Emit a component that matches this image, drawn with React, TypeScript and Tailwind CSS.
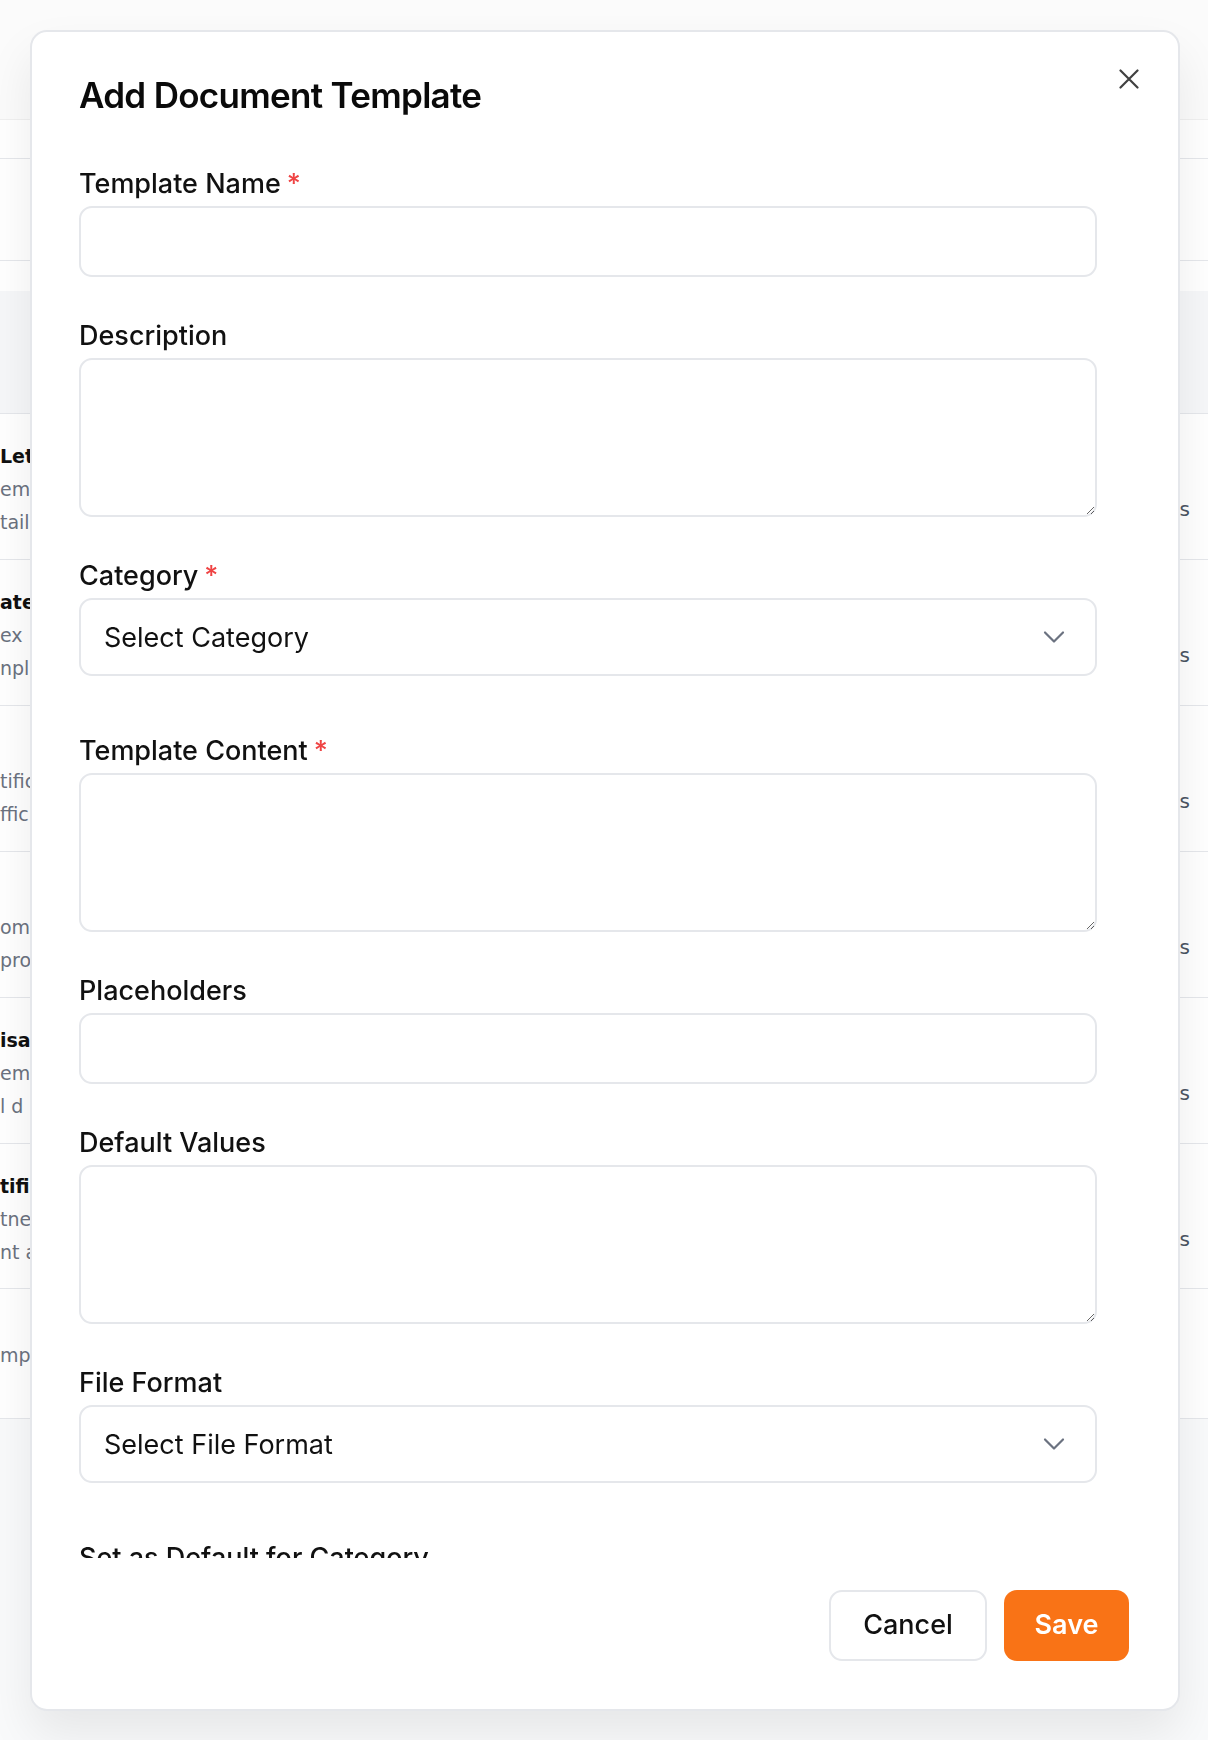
import React from 'react';

const rows = [
  { title: 'Letter', lines: ['employment', 'tails'], right: 'Documents', h: 'h-[146px]' },
  { title: 'ate Template', lines: ['ex', 'npl'], right: 'Documents', h: 'h-[146px]' },
  { title: '', lines: ['tification', 'fficial'], right: 'Documents', h: 'h-[146px]' },
  { title: '', lines: ['omp', 'proof'], right: 'Documents', h: 'h-[146px]' },
  { title: 'isal', lines: ['emp', 'l d'], right: 'Documents', h: 'h-[146px]' },
  { title: 'tific', lines: ['tne', 'nt a'], right: 'Documents', h: 'h-[145px]' },
];

const Label: React.FC<{ text: string; required?: boolean }> = ({ text, required }) => (
  <label className="block text-[27px] leading-[32px] font-medium text-[#111111] mb-[6px]">
    {text}
    {required && <span className="text-[#ef4444] ml-[6px]">*</span>}
  </label>
);

const Chevron = () => (
  <svg width="22" height="13" viewBox="0 0 22 13" fill="none" className="pointer-events-none absolute right-[32px] top-1/2 -translate-y-1/2">
    <path d="M2 2l9 9 9-9" stroke="#6b7280" strokeWidth="2.2" strokeLinecap="round" strokeLinejoin="round" />
  </svg>
);

const SelectField: React.FC<{ placeholder: string }> = ({ placeholder }) => (
  <div className="relative">
    <select
      defaultValue=""
      className="w-full h-[78px] appearance-none rounded-[13px] border-2 border-[#e5e7eb] bg-white pl-[23px] pr-[60px] pt-[3px] text-[27px] text-[#111111] outline-none"
    >
      <option value="">{placeholder}</option>
    </select>
    <Chevron />
  </div>
);

export default function App() {
  return (
    <div className="relative min-h-[1740px] bg-[#f9fafb] font-['DejaVu_Sans',sans-serif]">
      {/* page behind the dialog */}
      <div className="h-[120px] bg-[#fbfbfb] border-b border-[#f0f0f0]" />
      <div className="h-[39px] bg-white border-b border-[#e5e7eb]" />
      <div className="h-[102px] bg-white border-b border-[#e5e7eb]" />
      <div className="h-[30px] bg-white" />
      <div className="bg-white">
        <div className="h-[123px] bg-[#f6f7f9] border-b border-[#e5e7eb]" />
        {rows.map((row, idx) => (
          <div key={idx} className={`${row.h} flex justify-between border-b border-[#e5e7eb]`}>
            <div className="pt-[26px] text-[19px] leading-[33px] whitespace-nowrap">
              <div className="font-bold text-[#111111] h-[33px]">{row.title}</div>
              {row.lines.map((l, i) => (
                <div key={i} className="text-[#6b7280]">{l}</div>
              ))}
            </div>
            <div className="pt-[84px] pr-[18px] text-[20px] leading-[22px] text-[#4b5563]">{row.right}</div>
          </div>
        ))}
        <div className="h-[130px] flex border-b border-[#e5e7eb]">
          <div className="pt-[50px] text-[19px] leading-[33px] text-[#6b7280]">mp</div>
        </div>
      </div>

      {/* dialog */}
      <div className="fixed inset-0 flex items-start justify-start pl-[30px] pt-[30px] font-['Inter',sans-serif]">
        <div className="relative flex flex-col w-[1150px] h-[1681px] rounded-[17px] border-2 border-[#e5e7eb] bg-white shadow-[0_24px_48px_rgba(0,0,0,0.08)]">
          <button className="absolute top-[36px] right-[38px] w-[22px] h-[22px] flex items-center justify-center" aria-label="Close">
            <svg width="20" height="20" viewBox="0 0 20 20" fill="none">
              <path d="M1.5 1.5l17 17M18.5 1.5l-17 17" stroke="#404040" strokeWidth="2.2" strokeLinecap="round" />
            </svg>
          </button>

          <div className="pl-[47px] pr-[80px] pt-[42px] pb-[52px]">
            <h2 className="text-[35px] leading-[42px] font-semibold tracking-[-0.02em] text-[#0a0a0a]">
              Add Document Template
            </h2>
          </div>

          <div className="flex-1 min-h-0 overflow-hidden pl-[47px] pr-[81px]">
            <div className="flex flex-col gap-[43px]">
              <div>
                <Label text="Template Name" required />
                <input className="w-full h-[71px] rounded-[13px] border-2 border-[#e5e7eb] bg-white px-[22px] text-[27px] outline-none" />
              </div>
              <div>
                <Label text="Description" />
                <textarea className="block w-full h-[159px] rounded-[13px] border-2 border-[#e5e7eb] bg-white px-[22px] py-[14px] text-[27px] outline-none" />
              </div>
              <div className="pb-[16px]">
                <Label text="Category" required />
                <SelectField placeholder="Select Category" />
              </div>
              <div>
                <Label text="Template Content" required />
                <textarea className="block w-full h-[159px] rounded-[13px] border-2 border-[#e5e7eb] bg-white px-[22px] py-[14px] text-[27px] outline-none" />
              </div>
              <div>
                <Label text="Placeholders" />
                <input className="w-full h-[71px] rounded-[13px] border-2 border-[#e5e7eb] bg-white px-[22px] text-[27px] outline-none" />
              </div>
              <div>
                <Label text="Default Values" />
                <textarea className="block w-full h-[159px] rounded-[13px] border-2 border-[#e5e7eb] bg-white px-[22px] py-[14px] text-[27px] outline-none" />
              </div>
              <div className="pb-[16px]">
                <Label text="File Format" />
                <SelectField placeholder="Select File Format" />
              </div>
              <div>
                <Label text="Set as Default for Category" />
                <div className="h-[40px]" />
              </div>
            </div>
          </div>

          <div className="flex justify-end gap-[17px] pt-[32px] pb-[48px] pr-[49px]">
            <button className="w-[158px] h-[71px] rounded-[13px] border-2 border-[#e5e7eb] bg-white text-[27px] font-medium text-[#111111]">
              Cancel
            </button>
            <button className="w-[125px] h-[71px] rounded-[13px] bg-[#f97316] text-[27px] font-semibold text-white">
              Save
            </button>
          </div>
        </div>
      </div>
    </div>
  );
}
